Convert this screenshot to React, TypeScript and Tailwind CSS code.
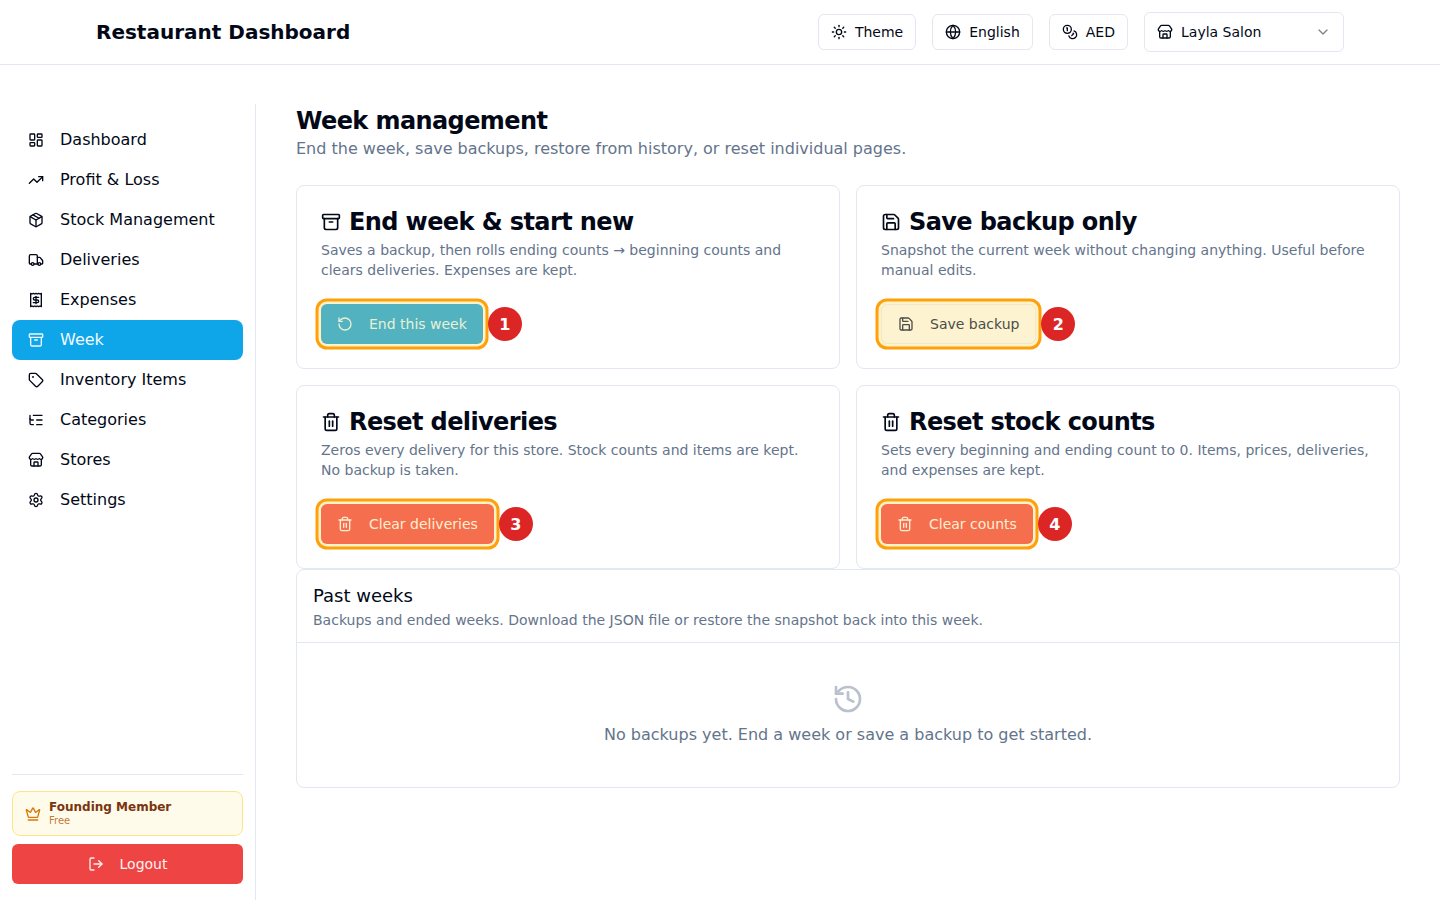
import {
  Archive,
  ChevronDown,
  Coins,
  Crown,
  Globe,
  History,
  LayoutDashboard,
  ListTree,
  LogOut,
  Package,
  RotateCcw,
  Save,
  Settings,
  Store,
  Sun,
  Tag,
  Trash2,
  TrendingUp,
  Truck,
  type LucideIcon,
} from 'lucide-react';

function ExpensesIcon({ className }: { className?: string }) {
  return (
    <svg
      viewBox="0 0 24 24"
      fill="none"
      stroke="currentColor"
      strokeWidth="2"
      strokeLinecap="round"
      strokeLinejoin="round"
      className={className}
    >
      <path d="M4 2v20l2-1 2 1 2-1 2 1 2-1 2 1 2-1 2 1V2l-2 1-2-1-2 1-2-1-2 1-2-1-2 1Z" />
      <path d="M16 8h-6a2 2 0 1 0 0 4h4a2 2 0 1 1 0 4H8" />
      <path d="M12 17.5v-11" />
    </svg>
  );
}

const navItems: { label: string; icon: LucideIcon | typeof ExpensesIcon; active?: boolean }[] = [
  { label: 'Dashboard', icon: LayoutDashboard },
  { label: 'Profit & Loss', icon: TrendingUp },
  { label: 'Stock Management', icon: Package },
  { label: 'Deliveries', icon: Truck },
  { label: 'Expenses', icon: ExpensesIcon },
  { label: 'Week', icon: Archive, active: true },
  { label: 'Inventory Items', icon: Tag },
  { label: 'Categories', icon: ListTree },
  { label: 'Stores', icon: Store },
  { label: 'Settings', icon: Settings },
];

const cards = [
  {
    title: 'End week & start new',
    body: 'Saves a backup, then rolls ending counts → beginning counts and clears deliveries. Expenses are kept.',
    icon: Archive,
    action: 'End this week',
    actionIcon: RotateCcw,
    tone: 'bg-[#52b2bf] text-[#e6f1d6]',
    step: 1,
  },
  {
    title: 'Save backup only',
    body: 'Snapshot the current week without changing anything. Useful before manual edits.',
    icon: Save,
    action: 'Save backup',
    actionIcon: Save,
    tone: 'bg-[#fdf3d0] text-[#4b4f4a] border border-[#f0e8c8]',
    step: 2,
  },
  {
    title: 'Reset deliveries',
    body: 'Zeros every delivery for this store. Stock counts and items are kept. No backup is taken.',
    icon: Trash2,
    action: 'Clear deliveries',
    actionIcon: Trash2,
    tone: 'bg-[#f56e4d] text-[#fdeed3]',
    step: 3,
  },
  {
    title: 'Reset stock counts',
    body: 'Sets every beginning and ending count to 0. Items, prices, deliveries, and expenses are kept.',
    icon: Trash2,
    action: 'Clear counts',
    actionIcon: Trash2,
    tone: 'bg-[#f56e4d] text-[#fdeed3]',
    step: 4,
  },
];

function HeaderButton({ icon: Icon, label }: { icon: LucideIcon; label: string }) {
  return (
    <button className="flex h-9 items-center gap-2 rounded-md border border-[#e2e8f0] bg-white px-3 text-sm text-[#020817]">
      <Icon className="h-4 w-4" />
      {label}
    </button>
  );
}

export default function App() {
  return (
    <div className="min-h-[900px] bg-white font-['DejaVu_Sans',sans-serif] text-[#020817]">
      <header className="flex h-[65px] items-center border-b border-[#e2e8f0] pl-24 pr-24">
        <h1 className="text-xl font-bold">Restaurant Dashboard</h1>
        <div className="ml-auto flex items-center gap-4">
          <HeaderButton icon={Sun} label="Theme" />
          <HeaderButton icon={Globe} label="English" />
          <HeaderButton icon={Coins} label="AED" />
          <button className="flex h-10 w-[200px] items-center justify-between rounded-md border border-[#e2e8f0] bg-white px-3 text-sm">
            <span className="flex items-center gap-2">
              <Store className="h-4 w-4" />
              Layla Salon
            </span>
            <ChevronDown className="h-4 w-4 opacity-50" />
          </button>
        </div>
      </header>

      <div className="flex pt-[39px]">
        <aside className="flex h-[796px] w-64 shrink-0 flex-col border-r border-[#e2e8f0] px-3 pt-4 pb-4">
          <nav className="flex flex-col">
            {navItems.map((item) => (
              <a
                key={item.label}
                className={`flex h-10 items-center gap-4 rounded-lg px-4 ${
                  item.active ? 'bg-[#0ea5e9] text-[#f0f9ff]' : 'text-[#020817]'
                }`}
              >
                <item.icon className="h-4 w-4 shrink-0" />
                {item.label}
              </a>
            ))}
          </nav>
          <div className="mt-auto border-t border-[#e2e8f0] pt-4">
            <div className="flex h-[45px] items-center gap-2 rounded-lg border border-[#fde68a] bg-[#fffbeb] px-3">
              <Crown className="h-4 w-4 shrink-0 text-[#d97706]" />
              <div className="flex flex-col">
                <span className="text-xs leading-[14px] font-bold text-[#78350f]">Founding Member</span>
                <span className="mt-px text-[10px] leading-[12px] text-[#b45309]/80">Free</span>
              </div>
            </div>
            <button className="mt-2 flex h-10 w-full items-center justify-center gap-4 rounded-md bg-[#ef4444] text-sm text-[#fef2f2]">
              <LogOut className="h-4 w-4" />
              Logout
            </button>
          </div>
        </aside>

        <main className="min-w-0 flex-1 pl-10 pr-10">
          <h2 className="pt-px text-2xl leading-8 font-bold tracking-tight">Week management</h2>
          <p className="text-base leading-6 text-[#64748b]">
            End the week, save backups, restore from history, or reset individual pages.
          </p>

          <div className="mt-6 grid grid-cols-2 gap-4">
            {cards.map((card) => (
              <section key={card.title} className="h-[184px] rounded-lg border border-[#e2e8f0] bg-white px-6 pt-5">
                <h3 className="flex items-center gap-2 text-2xl leading-8 font-bold tracking-tight text-[#020817]">
                  <card.icon className="h-5 w-5 shrink-0" />
                  {card.title}
                </h3>
                <p className="mt-[2px] text-sm leading-5 text-[#64748b]">{card.body}</p>
                <div className="relative mt-6 inline-flex items-center">
                  <button
                    className={`flex h-10 items-center gap-2 rounded-md pl-4 pr-4 text-sm shadow-[0_0_0_2.5px_#fef3c7,0_0_0_5.5px_#ff9f0a] ${card.tone}`}
                  >
                    <card.actionIcon className="mr-2 h-4 w-4" />
                    {card.action}
                  </button>
                  <span className="absolute -right-[39px] top-[3px] flex h-[34px] w-[34px] items-center justify-center rounded-full bg-[#dc2626] pt-px text-base font-bold text-white">
                    {card.step}
                  </span>
                </div>
              </section>
            ))}
          </div>

          <section className="h-[219px] rounded-lg border border-[#e2e8f0] bg-white">
            <div className="h-[73px] border-b border-[#e2e8f0] px-4 pt-[14px]">
              <h3 className="text-lg leading-6 text-[#020817]">Past weeks</h3>
              <p className="mt-[2px] text-sm leading-5 text-[#64748b]">
                Backups and ended weeks. Download the JSON file or restore the snapshot back into this week.
              </p>
            </div>
            <div className="flex flex-col items-center pt-10">
              <History className="h-8 w-8 text-[#b9c1cc]" />
              <p className="mt-2 text-base leading-6 text-[#64748b]">
                No backups yet. End a week or save a backup to get started.
              </p>
            </div>
          </section>
        </main>
      </div>
    </div>
  );
}
